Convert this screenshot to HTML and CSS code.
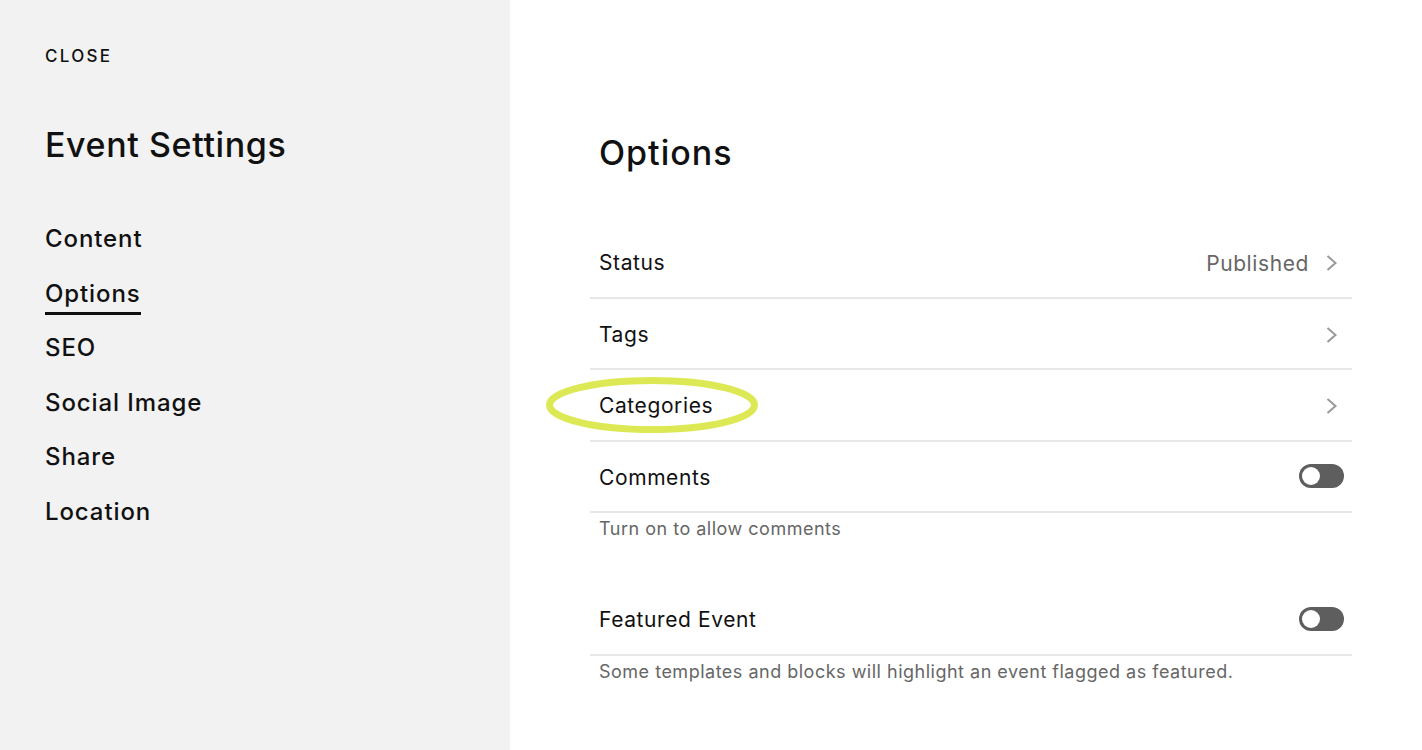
FILE: index.html
```html
<!DOCTYPE html>
<html lang="en">
<head>
<meta charset="utf-8">
<title>Event Settings</title>
<link rel="stylesheet" href="styles.css">
</head>
<body>
<div class="app">
  <aside class="sidebar">
    <div class="close">CLOSE</div>
    <h1 class="side-title">Event Settings</h1>
    <nav class="nav">
      <a class="nav-item">Content</a>
      <a class="nav-item active">Options</a>
      <a class="nav-item">SEO</a>
      <a class="nav-item">Social Image</a>
      <a class="nav-item">Share</a>
      <a class="nav-item">Location</a>
    </nav>
  </aside>
  <main class="main">
    <h2 class="main-title">Options</h2>
    <div class="list">
      <div class="row">
        <span class="label">Status</span>
        <span class="value">Published</span>
        <svg class="chev" width="12" height="16" viewBox="0 0 12 16"><path d="M1.5 1 L9.5 8 L1.5 15" fill="none" stroke="#999" stroke-width="2"/></svg>
      </div>
      <div class="row">
        <span class="label">Tags</span>
        <svg class="chev" width="12" height="16" viewBox="0 0 12 16"><path d="M1.5 1 L9.5 8 L1.5 15" fill="none" stroke="#999" stroke-width="2"/></svg>
      </div>
      <div class="row">
        <span class="label">Categories</span>
        <svg class="chev" width="12" height="16" viewBox="0 0 12 16"><path d="M1.5 1 L9.5 8 L1.5 15" fill="none" stroke="#999" stroke-width="2"/></svg>
        <svg class="ring" width="212" height="56" viewBox="0 0 212 56"><ellipse cx="106" cy="28" rx="102.5" ry="24.5" fill="none" stroke="#dde954" stroke-width="7"/></svg>
      </div>
      <div class="row">
        <span class="label">Comments</span>
        <span class="toggle"><span class="knob"></span></span>
      </div>
      <div class="desc">Turn on to allow comments</div>
      <div class="row">
        <span class="label">Featured Event</span>
        <span class="toggle"><span class="knob"></span></span>
      </div>
      <div class="desc">Some templates and blocks will highlight an event flagged as featured.</div>
    </div>
  </main>
</div>
</body>
</html>
```

FILE: styles.css
```css
* { box-sizing: border-box; }
html, body { margin: 0; padding: 0; }
body {
  font-family: Inter, "Noto Sans", sans-serif;
  color: #111;
  background: #fff;
}
.app {
  display: flex;
  height: 750px;
}
.sidebar {
  width: 510px;
  flex: none;
  background: #f2f2f2;
  padding: 46px 0 0 45px;
}
.close {
  font-size: 17px;
  font-weight: 500;
  letter-spacing: 2.3px;
  line-height: 20px;
}
.side-title {
  margin: 59px 0 0;
  font-size: 34px;
  font-weight: 500;
  line-height: 40px;
  letter-spacing: 0.6px;
}
.nav {
  margin-top: 59px;
  display: flex;
  flex-direction: column;
  align-items: flex-start;
}
.nav-item {
  font-size: 24px;
  font-weight: 500;
  line-height: 30px;
  margin-bottom: 24.5px;
  letter-spacing: 0.9px;
  color: #111;
}
.nav-item.active {
  box-shadow: inset 0 -3px 0 #111;
  padding-bottom: 6px;
  margin-bottom: 18.5px;
}
.main {
  flex: 1;
  padding: 133px 0 0 80px;
}
.main-title {
  margin: 0 0 0 9px;
  font-size: 34px;
  font-weight: 500;
  line-height: 40px;
  letter-spacing: 1px;
}
.list {
  width: 762px;
  margin-top: 54px;
}
.row {
  position: relative;
  display: flex;
  align-items: center;
  height: 71.5px;
  padding: 3px 14px 0 9px;
  border-bottom: 2px solid #e7e7e7;
}
.label {
  flex: 1;
  font-size: 21px;
  line-height: 24px;
  letter-spacing: 0.6px;
  color: #111;
}
.value {
  font-size: 21px;
  letter-spacing: 0.6px;
  color: #666;
  margin-right: 17px;
}
.chev { display: block; }
.ring {
  position: absolute;
  left: -44px;
  top: 7px;
}
.toggle {
  width: 45px;
  height: 24px;
  border-radius: 12px;
  background: #5e5e5e;
  position: relative;
  margin-top: -3px;
  margin-right: -6px;
}
.knob {
  position: absolute;
  left: 3px;
  top: 3px;
  width: 18px;
  height: 18px;
  border-radius: 50%;
  background: #fff;
}
.desc {
  padding: 6px 9px 0;
  height: 71px;
  font-size: 18px;
  line-height: 20px;
  letter-spacing: 0.5px;
  color: #666;
}
```
